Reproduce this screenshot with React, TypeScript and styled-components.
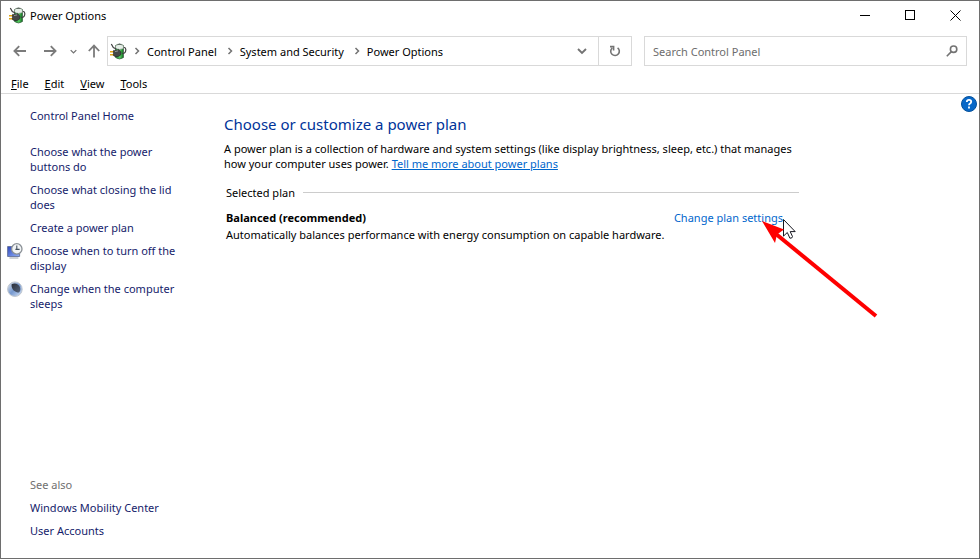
import React from "react";
import styled, { createGlobalStyle } from "styled-components";

const GlobalStyle = createGlobalStyle`
  *, *::before, *::after { box-sizing: border-box; }
  body {
    margin: 0;
    background: #fff;
    color: #000;
    font: 11px/15px "Noto Sans", "Open Sans", sans-serif;
  }
  button, input { font: inherit; color: inherit; }
`;

const Window = styled.div`
  display: flex;
  flex-direction: column;
  min-height: 100vh;
  border: 1px solid #6e6e6e;
`;

const TitleBar = styled.header`
  display: flex;
  align-items: center;
  height: 29px;
  padding: 0 1px 0 8px;
`;

const WindowTitle = styled.h1`
  flex: 1;
  margin: 0 0 0 4px;
  font-size: 11px;
  line-height: 15px;
  font-weight: 400;
`;

const PlainButton = styled.button`
  display: flex;
  align-items: center;
  justify-content: center;
  padding: 0;
  border: 0;
  background: transparent;
`;

const CaptionButton = styled(PlainButton)`
  width: 45px;
  height: 29px;
`;

const NavRow = styled.nav`
  display: flex;
  align-items: center;
  margin-top: 6px;
  padding: 0 12px 0 4px;
`;

const NavButton = styled(PlainButton)<{ $width: number }>`
  width: ${(p) => p.$width}px;
  height: 30px;
`;

const AddressBar = styled.div`
  display: flex;
  flex: 1;
  align-items: center;
  height: 30px;
  padding-left: 2px;
  border: 1px solid #d9d9d9;
`;

const Crumbs = styled.ol`
  display: flex;
  flex: 1;
  align-items: center;
  gap: 3px;
  margin: 0;
  padding: 0;
  list-style: none;
`;

const Crumb = styled.li`
  display: flex;
  align-items: center;
`;

const CrumbArrow = styled.span`
  display: flex;
  justify-content: center;
  width: 20px;
`;

const RefreshButton = styled(PlainButton)`
  width: 33px;
  height: 28px;
  border-left: 1px solid #d9d9d9;
`;

const SearchBox = styled.form`
  display: flex;
  flex: 0 1 323px;
  align-items: center;
  height: 30px;
  margin-left: 12px;
  padding: 0 8px;
  border: 1px solid #d9d9d9;
`;

const SearchInput = styled.input`
  flex: 1;
  min-width: 0;
  padding: 0;
  border: 0;
  outline: 0;
  background: transparent;
  &::placeholder { color: #6d6d6d; opacity: 1; }
`;

const MenuBar = styled.div`
  display: flex;
  gap: 16px;
  height: 28px;
  padding: 10px 10px 0;
  border-bottom: 1px solid #d9d9d9;
`;

const MenuButton = styled(PlainButton)`
  height: 15px;
`;

const MenuLabel = styled.span`
  display: block;
  &::first-letter { text-decoration: underline; }
`;

const Content = styled.div`
  display: flex;
  flex: 1;
`;

const Sidebar = styled.aside`
  display: flex;
  flex-direction: column;
  justify-content: space-between;
  width: 199px;
  padding: 14px 12px 20px 6px;
`;

const LinkList = styled.ul`
  display: flex;
  flex-direction: column;
  gap: 8px;
  margin: 0;
  padding: 0;
  list-style: none;
`;

const LinkItem = styled.li<{ $spaced?: boolean }>`
  display: grid;
  grid-template-columns: 16px 1fr;
  column-gap: 7px;
  margin-bottom: ${(p) => (p.$spaced ? 13 : 0)}px;
`;

const SideLink = styled.a`
  grid-column: 2;
  color: #151c6b;
  text-decoration: none;
`;

const SeeAlso = styled.h2`
  margin: 0 0 8px 23px;
  color: #707070;
  font-size: 11px;
  font-weight: 400;
`;

const Main = styled.main`
  flex: 1;
  padding: 19px 0 0 24px;
`;

const Heading = styled.h2`
  margin: 0 0 6px;
  color: #003399;
  font-size: 15px;
  line-height: 22px;
  font-weight: 400;
`;

const Intro = styled.p`
  max-width: 592px;
  margin: 0;
`;

const Link = styled.a<{ $underlined?: boolean }>`
  color: #0066cc;
  text-decoration: ${(p) => (p.$underlined ? "underline" : "none")};
`;

const PlanGroup = styled.section`
  max-width: 575px;
  margin-top: 14px;
  padding-left: 2px;
`;

const GroupTitle = styled.h3`
  display: flex;
  align-items: center;
  gap: 8px;
  margin: 0 0 10px;
  font-size: 11px;
  font-weight: 400;
  &::after {
    content: "";
    flex: 1;
    height: 1px;
    background: #cccccc;
  }
`;

const PlanHeader = styled.div`
  display: flex;
  justify-content: space-between;
  padding-right: 16px;
`;

const PlanName = styled.strong`
  font-weight: 700;
`;

const PlanAction = styled.span`
  position: relative;
`;

const Pointer = styled.svg`
  position: absolute;
  right: -96px;
  top: 6px;
  pointer-events: none;
`;

const PlanNote = styled.p`
  margin: 2px 0 0;
`;

const HelpButton = styled(PlainButton)`
  align-self: flex-start;
  width: 16px;
  height: 16px;
  margin: 2px 2px 0 0;
`;

const PowerIcon = () => (
  <svg width="17" height="17" viewBox="0 0 17 17" aria-hidden="true">
    <defs>
      <linearGradient id="cell" x1="0" x2="1">
        <stop offset="0" stopColor="#17832b" />
        <stop offset="0.55" stopColor="#58cf62" />
        <stop offset="1" stopColor="#0b6a1c" />
      </linearGradient>
    </defs>
    <path d="M5.5 2.5q4-3 8 0v12q-4 3-8 0z" fill="url(#cell)" stroke="#3b5c42" strokeWidth="0.7" />
    <path d="M5.6 2.6q4-3 7.8 0v3q-4 1.8-7.8 0z" fill="#e6efe8" stroke="#7d8a80" strokeWidth="0.6" />
    <path d="M7.5 1.4h4" stroke="#5a625c" strokeWidth="1" />
    <path d="M1.3 1l2 3.6 3 1.4M12 10.5c3 .2 4-1.6 3.8-4.2-.1-1.4-1-2-2-2" fill="none" stroke="#414141" strokeWidth="1.2" />
    <path d="M0 8.7h4M0 11.8h4" stroke="#e0a514" strokeWidth="1.6" />
    <path d="M3.5 7.4h3l2-1 2.5 2.5-.3 3-2.5 1.6H5l-1.6-1z" fill="#454747" stroke="#222" strokeWidth="0.6" />
    <path d="M5 8.5l3-.6" stroke="#a3a3a3" strokeWidth="0.9" />
  </svg>
);

const Chevron = ({ down, size = 8 }: { down?: boolean; size?: number }) => (
  <svg width={size} height={size} viewBox="0 0 8 8" fill="none" stroke="#737373" strokeWidth="1.5" aria-hidden="true">
    <path d={down ? "M0.8 2.4L4 5.6l3.2-3.2" : "M2.5 1l3 3-3 3"} />
  </svg>
);

const Arrow = ({ d }: { d: string }) => (
  <svg width="14" height="14" viewBox="0 0 14 14" fill="none" stroke="#7b7b7b" strokeWidth="1.8" aria-hidden="true">
    <path d={d} />
  </svg>
);

const DisplayIcon = () => (
  <svg width="16" height="17" viewBox="0 0 16 17" aria-hidden="true">
    <defs>
      <linearGradient id="screen" x1="0" y1="0" x2="1" y2="1">
        <stop offset="0" stopColor="#2b45bd" />
        <stop offset="1" stopColor="#93b2fa" />
      </linearGradient>
    </defs>
    <path d="M.6 3.5h12v10H.6z" fill="url(#screen)" stroke="#63719a" strokeWidth="0.9" />
    <path d="M2.4 15h9" stroke="#aeb4bd" strokeWidth="1.2" />
    <circle cx="9.8" cy="5.9" r="5.2" fill="#f2f4f5" stroke="#8a9096" strokeWidth="1.3" />
    <path d="M9.8 2.6v3.8h2.8M9.8 6.4H8.4" fill="none" stroke="#45525f" strokeWidth="1.1" />
  </svg>
);

const SleepIcon = () => (
  <svg width="16" height="17" viewBox="0 0 16 17" aria-hidden="true">
    <defs>
      <linearGradient id="moon" x1="0" y1="0" x2="1" y2="1">
        <stop offset="0" stopColor="#e4e9ee" />
        <stop offset="0.5" stopColor="#7698cf" />
        <stop offset="1" stopColor="#dce9fa" />
      </linearGradient>
      <linearGradient id="shade" x1="0" y1="0" x2="1" y2="1">
        <stop offset="0" stopColor="#2c3038" />
        <stop offset="1" stopColor="#53627c" />
      </linearGradient>
    </defs>
    <circle cx="7.9" cy="8.2" r="7.3" fill="url(#moon)" stroke="#c1c7ce" strokeWidth="1" />
    <path d="M4.6 3.2C8.4 1.6 12.4 3.4 13.2 7c.5 2.2-.3 3.6-1.2 4.6C8.4 11.4 4 8.6 4.6 3.2z" fill="url(#shade)" />
  </svg>
);

const menus = ["File", "Edit", "View", "Tools"];
const crumbs = ["Control Panel", "System and Security", "Power Options"];

const tasks: { label: string; icon?: React.ReactNode; spaced?: boolean }[] = [
  { label: "Control Panel Home", spaced: true },
  { label: "Choose what the power buttons do" },
  { label: "Choose what closing the lid does" },
  { label: "Create a power plan" },
  { label: "Choose when to turn off the display", icon: <DisplayIcon /> },
  { label: "Change when the computer sleeps", icon: <SleepIcon /> },
];

const related = ["Windows Mobility Center", "User Accounts"];

export default function App() {
  return (
    <>
      <GlobalStyle />
      <Window>
        <TitleBar>
          <PowerIcon />
          <WindowTitle>Power Options</WindowTitle>
          <CaptionButton aria-label="Minimize">
            <svg width="11" height="11" viewBox="0 0 11 11" stroke="#000" shapeRendering="crispEdges">
              <path d="M0 5.5h10" />
            </svg>
          </CaptionButton>
          <CaptionButton aria-label="Maximize">
            <svg width="11" height="11" viewBox="0 0 11 11" fill="none" stroke="#000" shapeRendering="crispEdges">
              <path d="M.5 .5h9v9h-9z" />
            </svg>
          </CaptionButton>
          <CaptionButton aria-label="Close">
            <svg width="11" height="11" viewBox="0 0 11 11" stroke="#000">
              <path d="M.5 .5l10 10M10.5 .5l-10 10" />
            </svg>
          </CaptionButton>
        </TitleBar>

        <NavRow aria-label="Navigation">
          <NavButton $width={30} aria-label="Back">
            <Arrow d="M13 7H1.5M6.2 2.2L1.4 7l4.8 4.8" />
          </NavButton>
          <NavButton $width={30} aria-label="Forward">
            <Arrow d="M1 7h11.5M7.8 2.2L12.6 7l-4.8 4.8" />
          </NavButton>
          <NavButton $width={16} aria-label="Recent locations">
            <Chevron down size={7} />
          </NavButton>
          <NavButton $width={26} aria-label="Up">
            <Arrow d="M7 13.5V2M1.8 7L7 1.6 12.2 7" />
          </NavButton>
          <AddressBar>
            <PowerIcon />
            <Crumbs>
              {crumbs.map((name) => (
                <Crumb key={name}>
                  <CrumbArrow>
                    <Chevron />
                  </CrumbArrow>
                  <PlainButton>{name}</PlainButton>
                </Crumb>
              ))}
            </Crumbs>
            <NavButton $width={32} aria-label="Previous locations">
              <Chevron down size={10} />
            </NavButton>
            <RefreshButton aria-label="Refresh">
              <svg width="12" height="12" viewBox="0 0 12 12" fill="none" stroke="#737373" strokeWidth="1.6">
                <path d="M8.6 2.8A4.3 4.3 0 1 1 3.2 3M1 1.6h3.6v3.8" />
              </svg>
            </RefreshButton>
          </AddressBar>
          <SearchBox role="search">
            <SearchInput type="search" aria-label="Search Control Panel" placeholder="Search Control Panel" />
            <svg width="12" height="12" viewBox="0 0 12 12" fill="none" stroke="#737373" strokeWidth="1.6" aria-hidden="true">
              <circle cx="7.6" cy="4.2" r="3.2" />
              <path d="M5.4 6.6L.8 11.2" />
            </svg>
          </SearchBox>
        </NavRow>

        <MenuBar role="menubar">
          {menus.map((name) => (
            <MenuButton key={name} role="menuitem">
              <MenuLabel>{name}</MenuLabel>
            </MenuButton>
          ))}
        </MenuBar>

        <Content>
          <Sidebar>
            <LinkList>
              {tasks.map((task) => (
                <LinkItem key={task.label} $spaced={task.spaced}>
                  {task.icon}
                  <SideLink href="#">{task.label}</SideLink>
                </LinkItem>
              ))}
            </LinkList>
            <div>
              <SeeAlso>See also</SeeAlso>
              <LinkList>
                {related.map((name) => (
                  <LinkItem key={name}>
                    <SideLink href="#">{name}</SideLink>
                  </LinkItem>
                ))}
              </LinkList>
            </div>
          </Sidebar>

          <Main>
            <Heading>Choose or customize a power plan</Heading>
            <Intro>
              A power plan is a collection of hardware and system settings (like display brightness, sleep, etc.) that
              manages how your computer uses power.{" "}
              <Link href="#" $underlined>
                Tell me more about power plans
              </Link>
            </Intro>
            <PlanGroup>
              <GroupTitle>Selected plan</GroupTitle>
              <PlanHeader>
                <PlanName>Balanced (recommended)</PlanName>
                <PlanAction>
                  <Link href="#">Change plan settings</Link>
                  <Pointer width="122" height="104" viewBox="0 0 122 104" aria-hidden="true">
                    <path
                      d="M26.5 3.5v16.6l3.8-3.6 2.6 5.7q2.6.2 2.6-1.7l-2.3-4.9h5z"
                      fill="#fff"
                      stroke="#16161f"
                    />
                    <path d="M19 18L119 100" stroke="#fe0000" strokeWidth="4" />
                    <path d="M5 5L27 13.5 20 18.5 18 27z" fill="#fe0000" />
                  </Pointer>
                </PlanAction>
              </PlanHeader>
              <PlanNote>Automatically balances performance with energy consumption on capable hardware.</PlanNote>
            </PlanGroup>
          </Main>

          <HelpButton aria-label="Help">
            <svg width="16" height="16" viewBox="0 0 16 16">
              <circle cx="8" cy="8" r="7.5" fill="#0868c8" stroke="#06519b" />
              <path d="M5.8 5.9q0-2 2.2-2 2.2 0 2.2 1.9 0 1.1-1.1 1.7-1.1.6-1.1 1.7M8 10.6v1.8" fill="none" stroke="#fff" strokeWidth="1.8" />
            </svg>
          </HelpButton>
        </Content>
      </Window>
    </>
  );
}
